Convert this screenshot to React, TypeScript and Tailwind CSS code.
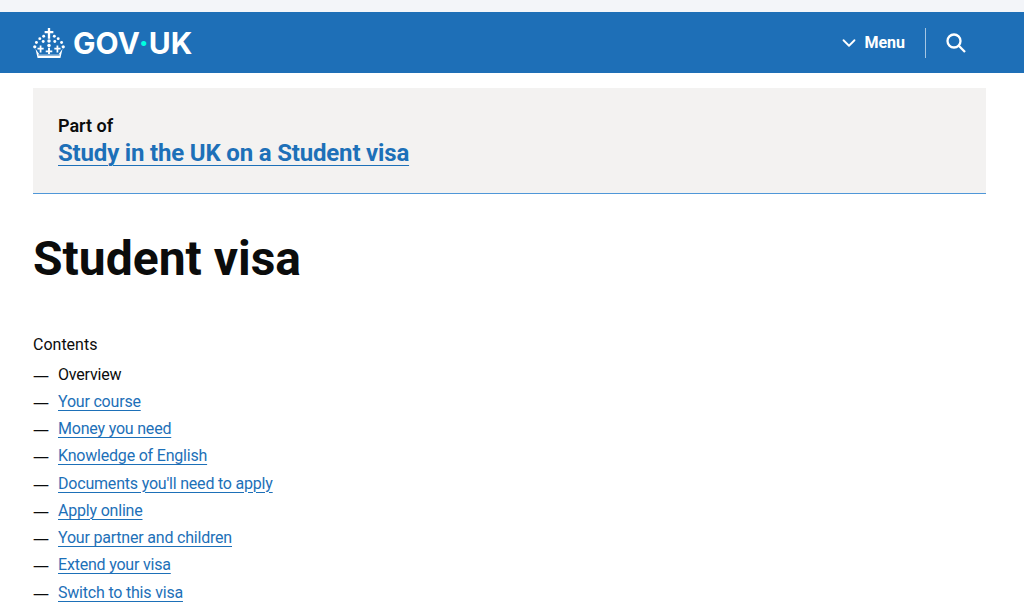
import React from 'react';
import { ChevronDown } from 'lucide-react';

const links = [
  'Your course',
  'Money you need',
  'Knowledge of English',
  "Documents you'll need to apply",
  'Apply online',
  'Your partner and children',
  'Extend your visa',
  'Switch to this visa',
];

// simplified tudor crown
const Crown = () => (
  <svg width="32" height="30" viewBox="0 0 33 31" fill="white" className="shrink-0">
    <path d="M15.300 0h2.400v3H21v2.400h-3.300V11h-2.400V5.400H12V3h3.300z" />
    <circle cx="16.5" cy="13.500" r="1.800" />
    <circle cx="16.5" cy="18" r="1.800" />
    <circle cx="11" cy="8.5" r="1.500" />
    <circle cx="22" cy="8.5" r="1.500" />
    <circle cx="7" cy="11" r="1.500" />
    <circle cx="26" cy="11" r="1.500" />
    <circle cx="3.5" cy="15" r="1.500" />
    <circle cx="29.5" cy="15" r="1.500" />
    <circle cx="1.8" cy="19.5" r="1.700" />
    <circle cx="31.2" cy="19.5" r="1.700" />
    <circle cx="10.5" cy="14" r="1.500" />
    <circle cx="22.5" cy="14" r="1.500" />
    <path d="M15.500 20.500h2v2.700h2.400v1.800h-2.400V27h-2v-2h-2.400v-1.800h2.400z" />
    <path d="M6.900 18h1.800v2.500H11v1.800H8.700v3H6.900v-3H4.600v-1.800h2.300z" />
    <path d="M24.300 18h1.800v2.500h2.300v1.800h-2.300v3h-1.800v-3H22v-1.800h2.300z" />
    <path d="M2.500 21.500l4 5.500h20l4-5.500-2.200 9.500H4.700z" />
    <path d="M5.500 27.300h22v1.100h-22z" fill="#1e6fb7" />
  </svg>
);

const App: React.FC = () => {
  return (
    <div className="h-[613px] w-[1024px] overflow-hidden bg-white text-[#0b0c0c] font-['Roboto',sans-serif]">
      <div className="h-3 bg-[#f3f5f9]" />

      {/* Header */}
      <header className="flex h-[61px] items-center justify-between bg-[#1e6fb7] pl-[33px] pr-[58px] text-white">
        <div className="flex items-center gap-[8px]">
          <Crown />
          <span className="font-['Inter',sans-serif] text-[30px] font-bold leading-none">
            GOV<span className="text-[#00ffe0]">·</span>UK
          </span>
        </div>
        <div className="flex items-center">
          <ChevronDown size={22} strokeWidth={2} className="mr-[4px]" />
          <span className="text-base font-bold">Menu</span>
          <div className="mx-5 h-[30px] w-px bg-[#a5c6e3]" />
          <svg width="20" height="20" viewBox="0 0 20 20" fill="none" stroke="white" strokeWidth="2.300">
            <circle cx="8" cy="8" r="6.500" />
            <path d="M12.800 12.800L19 19" />
          </svg>
        </div>
      </header>

      <main className="px-[33px] pt-[15px]">
        {/* Part of panel */}
        <div className="h-[105px] w-[953px] bg-[#f3f2f1] pl-[25px] pt-[26px]">
          <p className="text-lg font-semibold leading-6">Part of</p>
          <a className="block text-[24px] font-bold leading-[31px] tracking-[-0.18px] text-[#1d70b8] underline decoration-1 underline-offset-[4px]">
            Study in the UK on a Student visa
          </a>
        </div>
        <div className="h-px w-[953px] bg-[#4f97d8]" />

        <h1 className="mt-[33px] text-[48px] font-bold leading-[64px]">Student visa</h1>

        <p className="mt-[42px] text-base leading-6">Contents</p>
        <ul className="mt-[4px] flex flex-col text-base tracking-[-0.2px]">
          <li className="flex h-[27.250px] items-center">
            <span className="w-[25px] font-['Noto_Sans',sans-serif]">—</span>
            <span>Overview</span>
          </li>
          {links.map(l => (
            <li key={l} className="flex h-[27.250px] items-center">
              <span className="w-[25px] font-['Noto_Sans',sans-serif]">—</span>
              <a className="text-[#1d70b8] underline decoration-1 underline-offset-[3px]">{l}</a>
            </li>
          ))}
        </ul>
      </main>
    </div>
  );
};

export default App;
